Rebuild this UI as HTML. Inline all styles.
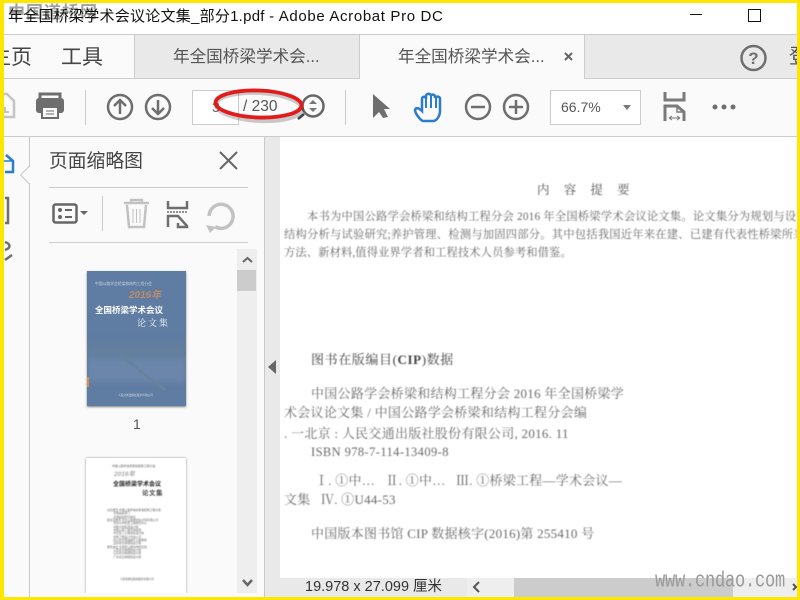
<!DOCTYPE html>
<html><head><meta charset="utf-8">
<style>
html,body{margin:0;padding:0;background:#fff;}
#r{position:relative;width:800px;height:600px;overflow:hidden;background:#fff;font-family:"Liberation Sans","Noto Sans CJK SC",sans-serif;color:#555;}
.a{position:absolute;}
.t{position:absolute;white-space:nowrap;line-height:1;}
.p{position:absolute;white-space:nowrap;line-height:1;font-family:"Liberation Serif","Noto Serif CJK SC",serif;color:#6a6a6a;filter:blur(.45px);}
svg{position:absolute;left:0;top:0;overflow:visible;}
</style></head><body><div id="r">

<!-- tab row -->
<div class="a" style="left:0;top:34px;width:800px;height:45px;background:#e9e9e9;border-top:1px solid #ccc;border-bottom:1px solid #ccc;box-sizing:border-box;"></div>
<div class="a" style="left:134px;top:35px;width:1px;height:44px;background:#ccc;"></div>
<div class="a" style="left:0;top:35px;width:134px;height:43px;background:#fafafa;"></div>
<div class="a" style="left:359px;top:35px;width:226px;height:44px;background:#fafafa;border-left:1px solid #ccc;border-right:1px solid #ccc;box-sizing:border-box;"></div>
<!-- toolbar -->
<div class="a" style="left:0;top:79px;width:800px;height:57px;background:#fafafa;"></div>
<div class="a" style="left:0;top:136px;width:800px;height:1px;background:#ccc;"></div>
<div class="a" style="left:0;top:78px;width:359px;height:1px;background:#ccc;"></div>
<div class="a" style="left:585px;top:78px;width:215px;height:1px;background:#ccc;"></div>
<!-- panels -->
<div class="a" style="left:0;top:137px;width:265px;height:463px;background:#fafafa;"></div>
<div class="a" style="left:29px;top:137px;width:1px;height:463px;background:#c8c8c8;"></div>
<div class="a" style="left:264px;top:137px;width:1px;height:463px;background:#c8c8c8;"></div>
<div class="a" style="left:265px;top:137px;width:15px;height:463px;background:#e9e9e9;"></div>

<!-- watermark top -->
<div class="t" style="left:8px;top:4px;font-size:17px;color:#a0a0a0;letter-spacing:1px;font-family:'Liberation Sans','Noto Sans CJK SC',sans-serif;font-weight:bold;filter:blur(.3px);">中国道桥网</div>

<!-- title -->
<div class="t" style="left:8px;top:9px;font-size:15px;color:#111;letter-spacing:.25px;">年全国桥梁学术会议论文集_部分1.pdf <span style="letter-spacing:.65px;">- Adobe Acrobat Pro DC</span></div>
<div class="a" style="left:690px;top:14px;width:12px;height:1px;background:#111;"></div>
<div class="a" style="left:748px;top:9px;width:11px;height:11px;border:1px solid #111;"></div>

<!-- tabs -->
<div class="t" style="left:-10px;top:47px;font-size:21px;color:#444;">主页</div>
<div class="t" style="left:61px;top:47px;font-size:21px;color:#444;">工具</div>
<div class="t" style="left:173px;top:49px;font-size:16.600px;color:#555;">年全国桥梁学术会...</div>
<div class="t" style="left:398px;top:49px;font-size:16.600px;color:#555;">年全国桥梁学术会...</div>
<div class="t" style="left:789px;top:47px;font-size:20px;color:#555;">登</div>

<svg width="800" height="600" fill="none">
 <!-- tab x -->
 <path d="M565 53l7 7M572 53l-7 7" stroke="#666" stroke-width="2"/>
 <!-- help -->
 <circle cx="753.500" cy="58" r="12" stroke="#6e6e6e" stroke-width="2.500"/>
 <text x="753.500" y="64" font-size="17" font-weight="bold" fill="#6e6e6e" text-anchor="middle" font-family="Liberation Sans">?</text>
 <!-- save -->
 <path d="M4 94h3l7 7v16H4" stroke="#c4c4c4" stroke-width="2.500"/>
 <path d="M5 107v5h4" stroke="#c4c4c4" stroke-width="2"/>
 <!-- print -->
 <path d="M40 100v-6h20v6" stroke="#6e6e6e" stroke-width="3"/>
 <rect x="36" y="98" width="28" height="15" rx="3" fill="#6e6e6e"/>
 <rect x="42" y="107" width="16" height="11" fill="#fafafa" stroke="#6e6e6e" stroke-width="2"/>
 <path d="M46 111h8M46 114h8" stroke="#6e6e6e"/>
 <path d="M85.500 90v35" stroke="#ccc"/>
 <!-- up/down -->
 <circle cx="120" cy="107" r="12" stroke="#6e6e6e" stroke-width="2.500"/>
 <path d="M120 114v-14M114 106l6-6 6 6" stroke="#6e6e6e" stroke-width="2.500"/>
 <circle cx="158" cy="107" r="12" stroke="#6e6e6e" stroke-width="2.500"/>
 <path d="M158 100v14M152 108l6 6 6-6" stroke="#6e6e6e" stroke-width="2.500"/>
 <!-- page box -->
 <rect x="192.500" y="90.500" width="46" height="34" fill="#fff" stroke="#ccc"/>
 <!-- stepper -->
 <circle cx="313" cy="106" r="10.500" stroke="#666" stroke-width="2.500"/>
 <path d="M309 104l4-4 4 4zM309 108l4 4 4-4z" fill="#777"/>
 <path d="M304 114l-6 5" stroke="#444" stroke-width="2.500"/>
 <path d="M345.500 90v35" stroke="#ccc"/>
 <!-- arrow -->
 <path d="M373 94v24l6-6 4 6 5-1-4-8h6z" fill="#6e6e6e"/>
 <!-- hand -->
 <path d="M423 121c-3-1-8-8-8-11 1-3 4-2 7 1V99c0-3 4-3 4 0v-3c0-3 5-3 5 0v0c0-2 4-2 4 1v1c1-2 5-2 5 1v12c0 5-3 9-6 10z" stroke="#2b7cc9" stroke-width="2.500" fill="#fafafa"/>
 <path d="M426 99v9M431 96v12M436 98v10" stroke="#2b7cc9" stroke-width="2"/>
 <!-- zoom -->
 <circle cx="478" cy="107" r="12" stroke="#6e6e6e" stroke-width="2.500"/>
 <path d="M471 107h14" stroke="#6e6e6e" stroke-width="2.500"/>
 <circle cx="516" cy="107" r="12" stroke="#6e6e6e" stroke-width="2.500"/>
 <path d="M509 107h14M516 100v14" stroke="#6e6e6e" stroke-width="2.500"/>
 <!-- zoom box -->
 <rect x="550.500" y="90.500" width="90" height="34" fill="#fff" stroke="#ccc"/>
 <path d="M623 105h8l-4 5z" fill="#777"/>
 <!-- fit page -->
 <path d="M665 92v8h19v-8" stroke="#7a7a7a" stroke-width="3"/>
 <path d="M665 121v-15h12l7 6v9" stroke="#7a7a7a" stroke-width="3"/>
 <path d="M677 106v6h7" stroke="#7a7a7a" stroke-width="1.500"/>
 <path d="M669 118h11M669 118l3-2M669 118l3 2M680 118l-3-2M680 118l-3 2" stroke="#777" stroke-width="1"/>
 <circle cx="715" cy="107" r="2.500" fill="#6e6e6e"/><circle cx="724" cy="107" r="2.500" fill="#6e6e6e"/><circle cx="733" cy="107" r="2.500" fill="#6e6e6e"/>

 <!-- left strip icons -->
 <path d="M6 155l7 6v11H5" stroke="#2b7cc9" stroke-width="2.500"/>
 <path d="M4 161h9" stroke="#2b7cc9" stroke-width="1.500"/>
 <path d="M5 198h3v25H5" stroke="#6e6e6e" stroke-width="2.500"/>
 <path d="M5 242c6 2 6 6 0 8M5 260l7-5" stroke="#6e6e6e" stroke-width="2.500"/>
 <!-- panel notch -->
 <path d="M29.500 166l-9 9 9 9" stroke="#c8c8c8" fill="#fafafa"/>
 <path d="M30 167v16" stroke="#fafafa" stroke-width="2"/>
 <!-- panel close -->
 <path d="M220 152l17 17M237 152l-17 17" stroke="#666" stroke-width="2"/>
 <path d="M49 187.500h199M49 242.500h199" stroke="#ccc"/>
 <path d="M102.500 196v35" stroke="#ccc"/>
 <!-- options -->
 <rect x="53.500" y="204.500" width="23" height="18" rx="2" stroke="#666" stroke-width="2.500"/>
 <circle cx="60" cy="210" r="2" fill="#666"/><circle cx="60" cy="217" r="2" fill="#666"/>
 <path d="M65 210h7M65 217h7" stroke="#666" stroke-width="2"/>
 <path d="M80 211h8l-4 4z" fill="#666"/>
 <!-- trash -->
 <path d="M124 203h25M131 203v-3h11v3" stroke="#c2c2c2" stroke-width="2.500"/>
 <path d="M127 205l2 22h15l2-22" stroke="#c2c2c2" stroke-width="2.500"/>
 <path d="M133 209v14M136.500 209v14M140 209v14" stroke="#c2c2c2"/>
 <!-- page insert -->
 <path d="M168 201v7h19v-7" stroke="#6e6e6e" stroke-width="2.500"/>
 <path d="M167 212h21" stroke="#6e6e6e" stroke-width="1.500" stroke-dasharray="2 1"/>
 <path d="M168 227v-11h10l9 10v1h-9v-4" stroke="#6e6e6e" stroke-width="2.500"/>
 <!-- rotate -->
 <path d="M212 225a12 12 0 1 0-3-12" stroke="#c2c2c2" stroke-width="3.500" transform="rotate(-15 220 214)"/>
 <path d="M206 225l10 2-6 6z" fill="#c2c2c2"/>
</svg>

<div class="t" style="left:49px;top:152px;font-size:18.800px;color:#444;">页面缩略图</div>

<!-- page number -->
<div class="t" style="left:212px;top:100px;font-size:14px;color:#666;">3</div>
<div class="a" style="left:238px;top:90px;width:1px;height:35px;background:#ccc;"></div>
<div class="t" style="left:243px;top:99px;font-size:15.500px;color:#555;">/ 230</div>
<div class="t" style="left:561px;top:100px;font-size:14px;color:#555;">66.7%</div>

<!-- thumb scroll -->
<div class="a" style="left:237px;top:249px;width:20px;height:344px;background:#eee;"></div>
<div class="a" style="left:237px;top:270px;width:19px;height:21px;background:#ccc;"></div>
<svg width="800" height="600" fill="none">
 <path d="M243 262l4.500-4 4.500 4" stroke="#666" stroke-width="2"/>
 <path d="M243 580l4.500 5 4.500-5" stroke="#666" stroke-width="2.500"/>
</svg>

<!-- thumb 1 -->
<div class="a" style="left:87px;top:271px;width:99px;height:135px;background:#5f7ca2;box-shadow:0 1px 2px rgba(0,0,0,.5);overflow:hidden;">
 <div class="a" style="left:0;top:85px;width:99px;height:26px;background:#6b86aa;filter:blur(3px);"></div>
 <div class="a" style="left:0;top:72px;width:99px;height:14px;background:#64809f;filter:blur(4px);"></div>
 <svg width="99" height="135" fill="none"><path d="M33 84l45 35" stroke="#67829f" stroke-width="3"/></svg>
 <div class="a" style="left:0;top:106px;width:2px;height:10px;background:#d98a55;"></div>
 <div class="t" style="left:8px;top:12px;font-size:3.800px;color:#c7d2e0;">中国公路学会桥梁和结构工程分会</div>
 <div class="t" style="left:42px;top:20px;font-size:10px;font-weight:bold;font-style:italic;color:#c08a66;">2016年</div>
 <div class="t" style="left:8px;top:35px;font-size:8.500px;font-weight:bold;color:#fff;">全国桥梁学术会议</div>
 <div class="t" style="left:50px;top:48px;font-size:9px;color:#f0f3f7;font-family:'Liberation Serif','Noto Serif CJK SC',serif;letter-spacing:2px;">论文集</div>
 <div class="t" style="left:31px;top:124px;font-size:2.700px;color:#d5dde8;">人民交通出版社股份有限公司</div>
</div>
<div class="t" style="left:133px;top:417px;font-size:14px;color:#555;">1</div>

<!-- thumb 2 -->
<div class="a" style="left:86px;top:458px;width:100px;height:135px;background:#fff;box-shadow:0 0 2px rgba(0,0,0,.45);overflow:hidden;clip-path:inset(-3px -3px 0 -3px);">
 <div style="position:absolute;left:0;top:0;width:100px;height:135px;filter:blur(.5px);">
 <div class="t" style="left:26px;top:7px;font-size:2.900px;color:#666;">中国公路学会桥梁和结构工程分会</div>
 <div class="t" style="left:28px;top:14px;font-size:6.500px;color:#aaa;font-style:italic;font-weight:bold;">2016年</div>
 <div class="t" style="left:27px;top:24px;font-size:6px;font-weight:bold;color:#222;">全国桥梁学术会议</div>
 <div class="t" style="left:56px;top:33px;font-size:6.500px;font-weight:bold;color:#444;letter-spacing:.5px;">论文集</div>
 <div style="position:absolute;left:21px;top:51px;font-size:2.800px;line-height:3.350px;color:#666;white-space:pre;">主任委员 中国公路学会桥梁和结构工程分会
        交通运输部门
        交通运输研究单位
副主任委员 中交公路规划设计院有限公司
        同济大学桥梁工程研究中心
        中铁大桥勘测设计院
        中国公路工程咨询集团
        中交第二公路勘察设计院
        中铁工程设计咨询公司
        四川省交通运输厅公路规划
        云南省交通规划设计院
委员单位 交通部公路科学研究院
        江苏省交通规划设计院
        山东省交通规划设计院
        广东省交通规划设计院</div>
 <div class="t" style="left:34px;top:121px;font-size:2.600px;color:#555;">人民交通出版社股份有限公司</div>
 </div>
</div>

<!-- collapse arrow -->
<svg width="800" height="600"><path d="M268 367l8-7v14z" fill="#666"/></svg>

<!-- page content -->
<div class="p" style="left:537px;top:184px;font-size:12.500px;color:#555;letter-spacing:14.200px;">内容提要</div>
<div class="p" style="left:307px;top:212px;font-size:11.300px;letter-spacing:.2px;">本书为中国公路学会桥梁和结构工程分会 2016 年全国桥梁学术会议论文集。论文集分为规划与设</div>
<div class="p" style="left:284px;top:230px;font-size:11.300px;letter-spacing:.2px;">结构分析与试验研究;养护管理、检测与加固四部分。其中包括我国近年来在建、已建有代表性桥梁所采</div>
<div class="p" style="left:284px;top:248px;font-size:11.300px;letter-spacing:.1px;">方法、新材料,值得业界学者和工程技术人员参考和借鉴。</div>
<div class="p" style="left:311px;top:353px;font-size:13px;color:#444;letter-spacing:.6px;">图书在版编目(<b>CIP</b>)数据</div>
<div class="p" style="left:311px;top:387px;font-size:13px;letter-spacing:.28px;">中国公路学会桥梁和结构工程分会 2016 年全国桥梁学</div>
<div class="p" style="left:284px;top:406px;font-size:13px;letter-spacing:.28px;">术会议论文集 / 中国公路学会桥梁和结构工程分会编</div>
<div class="p" style="left:284px;top:427px;font-size:13px;letter-spacing:.28px;">. 一北京 : 人民交通出版社股份有限公司, 2016. 11</div>
<div class="p" style="left:311px;top:446px;font-size:12.500px;letter-spacing:.4px;">ISBN  978-7-114-13409-8</div>
<div class="p" style="left:315px;top:474px;font-size:13px;letter-spacing:.25px;">Ⅰ. ①中…&nbsp;&nbsp;&nbsp;Ⅱ. ①中…&nbsp;&nbsp;&nbsp;Ⅲ. ①桥梁工程—学术会议—</div>
<div class="p" style="left:284px;top:493px;font-size:13px;letter-spacing:.25px;">文集&nbsp;&nbsp;&nbsp;Ⅳ. ①U44-53</div>
<div class="p" style="left:311px;top:527px;font-size:13px;letter-spacing:.25px;">中国版本图书馆 CIP 数据核字(2016)第 255410 号</div>

<!-- status bar -->
<div class="a" style="left:280px;top:578px;width:187px;height:22px;background:#e9e9e9;"></div>
<div class="a" style="left:467px;top:578px;width:333px;height:22px;background:#eee;"></div>
<div class="a" style="left:514px;top:578px;width:219px;height:19px;background:#ccc;"></div>
<div class="t" style="left:305px;top:580px;font-size:14.500px;color:#333;">19.978 x 27.099 厘米</div>
<svg width="800" height="600" fill="none"><path d="M479 582l-5 5 5 5M793 584l3 3-3 3" stroke="#555" stroke-width="2"/></svg>

<!-- watermark bottom -->
<div class="t" style="left:655px;top:571px;font-size:17px;color:#9a9a9a;font-family:'Liberation Mono',monospace;letter-spacing:-.2px;transform:scaleY(1.3);transform-origin:0 0;">www.cndao.com</div>

<!-- red ellipse -->
<svg width="800" height="600" fill="none">
 <ellipse cx="259" cy="107" rx="43" ry="14" stroke="rgba(0,0,0,.2)" stroke-width="4" transform="rotate(3 259 107)"/>
 <ellipse cx="258.500" cy="104" rx="43" ry="13.500" stroke="#e21b1b" stroke-width="3.800" transform="rotate(2 258.500 104)"/>
</svg>

<!-- yellow frame -->
<div class="a" style="left:0;top:0;width:800px;height:3px;background:#ffe600;"></div>
<div class="a" style="left:0;top:0;width:4px;height:600px;background:#ffe600;"></div>
<div class="a" style="left:0;top:597px;width:800px;height:3px;background:#ffe600;"></div>
<div class="a" style="left:797px;top:0;width:3px;height:600px;background:#ffe600;"></div>
</div></body></html>
